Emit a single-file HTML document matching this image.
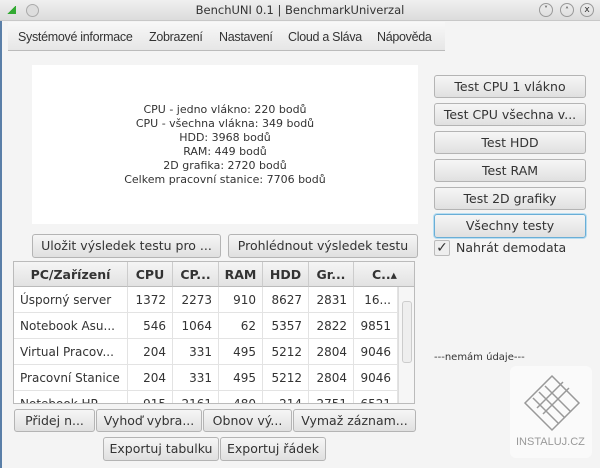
<!DOCTYPE html>
<html><head><meta charset="utf-8"><style>
*{box-sizing:border-box;margin:0;padding:0}
body{width:600px;height:468px;overflow:hidden;background:#f4f4f4;font-family:"DejaVu Sans","Liberation Sans",sans-serif;font-size:12px;color:#333;position:relative}
.a{position:absolute}
.tb{left:0;top:0;width:600px;height:21px;background:linear-gradient(#f0f0f0,#dcdcdc);border-bottom:1px solid #c8c8c8;text-align:center;font-size:11.5px;line-height:21px;color:#333}
.lb{left:0;top:21px;width:2px;height:447px;background:#5a7fa8}
.menu{left:8px;top:22px;width:437px;height:29px;background:linear-gradient(#f8f8f8,#e6e6e6);border-bottom:1px solid #bbb;font-family:"Liberation Sans",sans-serif;font-size:12.5px;letter-spacing:-0.3px;line-height:31px;color:#333}
.menu span{position:absolute;top:0}
.btn{position:absolute;background:linear-gradient(#f6f6f6,#e0e0e0);border:1px solid #b4b4b4;border-radius:3px;text-align:center;font-size:12.5px;color:#333;white-space:nowrap;overflow:hidden}
.pan{left:32px;top:65px;width:386px;height:159px;background:#fff;text-align:center;font-size:11px;line-height:14px;padding-top:38px;color:#333}
.tbl{left:13px;top:261px;width:402px;height:143px;border:1px solid #bbb;background:#fff;overflow:hidden}
.hd{position:absolute;top:0;height:25px;background:linear-gradient(#f5f5f5,#e2e2e2);border-right:1px solid #ccc;border-bottom:1px solid #bbb;font-weight:bold;line-height:25px;text-align:center;font-size:12.5px}
.c{position:absolute;height:26px;line-height:26px;border-right:1px solid #e3e3e3;border-bottom:1px solid #e3e3e3;padding:0 6px;text-align:right;white-space:nowrap}
</style></head><body>
<div class="a tb">BenchUNI 0.1 | BenchmarkUniverzal</div>
<div class="a" style="left:6px;top:6px;width:10px;height:8px;background:linear-gradient(135deg,transparent 50%,#3a3 50%)"></div>
<div class="a" style="left:26px;top:4px;width:13px;height:13px;border-radius:50%;background:#ddd;border:1px solid #aaa"></div>
<div class="a" style="left:539px;top:3px;width:14px;height:14px;border-radius:50%;border:1px solid #999;font-size:8px;line-height:12px;text-align:center">˅</div>
<div class="a" style="left:560px;top:3px;width:14px;height:14px;border-radius:50%;border:1px solid #999;font-size:8px;line-height:14px;text-align:center">˄</div>
<div class="a" style="left:580px;top:3px;width:14px;height:14px;border-radius:50%;border:1px solid #999;font-size:9px;line-height:12px;text-align:center">x</div>
<div class="a lb"></div>
<div class="a menu"><span style="left:10px">Systémové informace</span><span style="left:141px">Zobrazení</span><span style="left:211px">Nastavení</span><span style="left:280px">Cloud a Sláva</span><span style="left:369px">Nápověda</span></div>
<div class="a pan">CPU - jedno vlákno: 220 bodů<br>CPU - všechna vlákna: 349 bodů<br>HDD: 3968 bodů<br>RAM: 449 bodů<br>2D grafika: 2720 bodů<br>Celkem pracovní stanice: 7706 bodů</div>
<div class="btn" style="left:434px;top:75px;width:152px;height:23px;line-height:21px">Test CPU 1 vlákno</div>
<div class="btn" style="left:434px;top:103px;width:152px;height:23px;line-height:21px">Test CPU všechna v...</div>
<div class="btn" style="left:434px;top:131px;width:152px;height:23px;line-height:21px">Test HDD</div>
<div class="btn" style="left:434px;top:159px;width:152px;height:23px;line-height:21px">Test RAM</div>
<div class="btn" style="left:434px;top:187px;width:152px;height:23px;line-height:21px">Test 2D grafiky</div>
<div class="btn" style="left:434px;top:214px;width:152px;height:24px;line-height:21px;border:1px solid #6aaed6;box-shadow:0 0 0 1px #b8def2">Všechny testy</div>
<div class="a" style="left:434px;top:240px;width:16px;height:16px;border:1px solid #bbb;background:#eee;border-radius:2px;font-size:14px;line-height:14px;text-align:center;color:#333">✓</div>
<div class="a" style="left:456px;top:240px;font-size:12.5px;line-height:16px">Nahrát demodata</div>
<div class="a" style="left:434px;top:352px;font-size:10px">---nemám údaje---</div>
<div class="a" style="left:510px;top:366px;width:82px;height:92px;background:#fafafa;border-radius:6px"></div>
<svg class="a" style="left:515px;top:368px" width="75" height="70" viewBox="0 0 75 70"><g fill="none" stroke="#999" stroke-width="1.5"><path d="M10 35 L37 8 L64 35 L37 62 Z"/><path d="M18 30 L44 56 M24 24 L50 50 M30 18 L56 44 M22 40 L48 14 M28 46 L54 20"/></g></svg>
<div class="a" style="left:516px;top:436px;font-family:'Liberation Sans',sans-serif;font-size:11px;color:#999">INSTALUJ.CZ</div>
<div class="btn" style="left:32px;top:234px;width:189px;height:24px;line-height:22px">Uložit výsledek testu pro ...</div>
<div class="btn" style="left:228px;top:234px;width:190px;height:24px;line-height:22px">Prohlédnout výsledek testu</div>
<div class="a tbl">
<div class="hd" style="left:0;width:114px">PC/Zařízení</div>
<div class="hd" style="left:114px;width:45px">CPU</div>
<div class="hd" style="left:159px;width:46px">CP...</div>
<div class="hd" style="left:205px;width:44px">RAM</div>
<div class="hd" style="left:249px;width:46px">HDD</div>
<div class="hd" style="left:295px;width:45px">Gr...</div>
<div class="hd" style="left:340px;width:61px;text-align:left;padding-left:18px">C..▴</div>
<div class="a" style="left:384px;top:25px;width:17px;height:118px;background:#f6f6f6;border-left:1px solid #ddd"><div class="a" style="left:3px;top:14px;width:10px;height:62px;border:1px solid #ccc;border-radius:3px;background:#eee"></div></div>
<div id="rows"></div>
</div>
<script>
var d=[["Úsporný server",1372,2273,910,8627,2831,"16..."],["Notebook Asu...",546,1064,62,5357,2822,9851],["Virtual Pracov...",204,331,495,5212,2804,9046],["Pracovní Stanice",204,331,495,5212,2804,9046],["Notebook HP",915,2161,480,214,2751,6521]];
var L=[0,114,159,205,249,295,340],W=[114,45,46,44,46,45,44],h="";
d.forEach(function(r,i){r.forEach(function(v,j){h+='<div class="c" style="top:'+(25+i*26)+'px;left:'+L[j]+'px;width:'+W[j]+'px;'+(j==0?'text-align:left':'')+'">'+v+'</div>'})});
document.getElementById("rows").innerHTML=h;
</script>
<div class="btn" style="left:14px;top:409px;width:81px;height:23px;line-height:21px">Přidej n...</div>
<div class="btn" style="left:96px;top:409px;width:106px;height:23px;line-height:21px">Vyhoď vybra...</div>
<div class="btn" style="left:203px;top:409px;width:89px;height:23px;line-height:21px">Obnov vý...</div>
<div class="btn" style="left:293px;top:409px;width:123px;height:23px;line-height:21px">Vymaž záznam...</div>
<div class="btn" style="left:103px;top:437px;width:116px;height:24px;line-height:22px">Exportuj tabulku</div>
<div class="btn" style="left:220px;top:437px;width:106px;height:24px;line-height:22px">Exportuj řádek</div>
</body></html>
